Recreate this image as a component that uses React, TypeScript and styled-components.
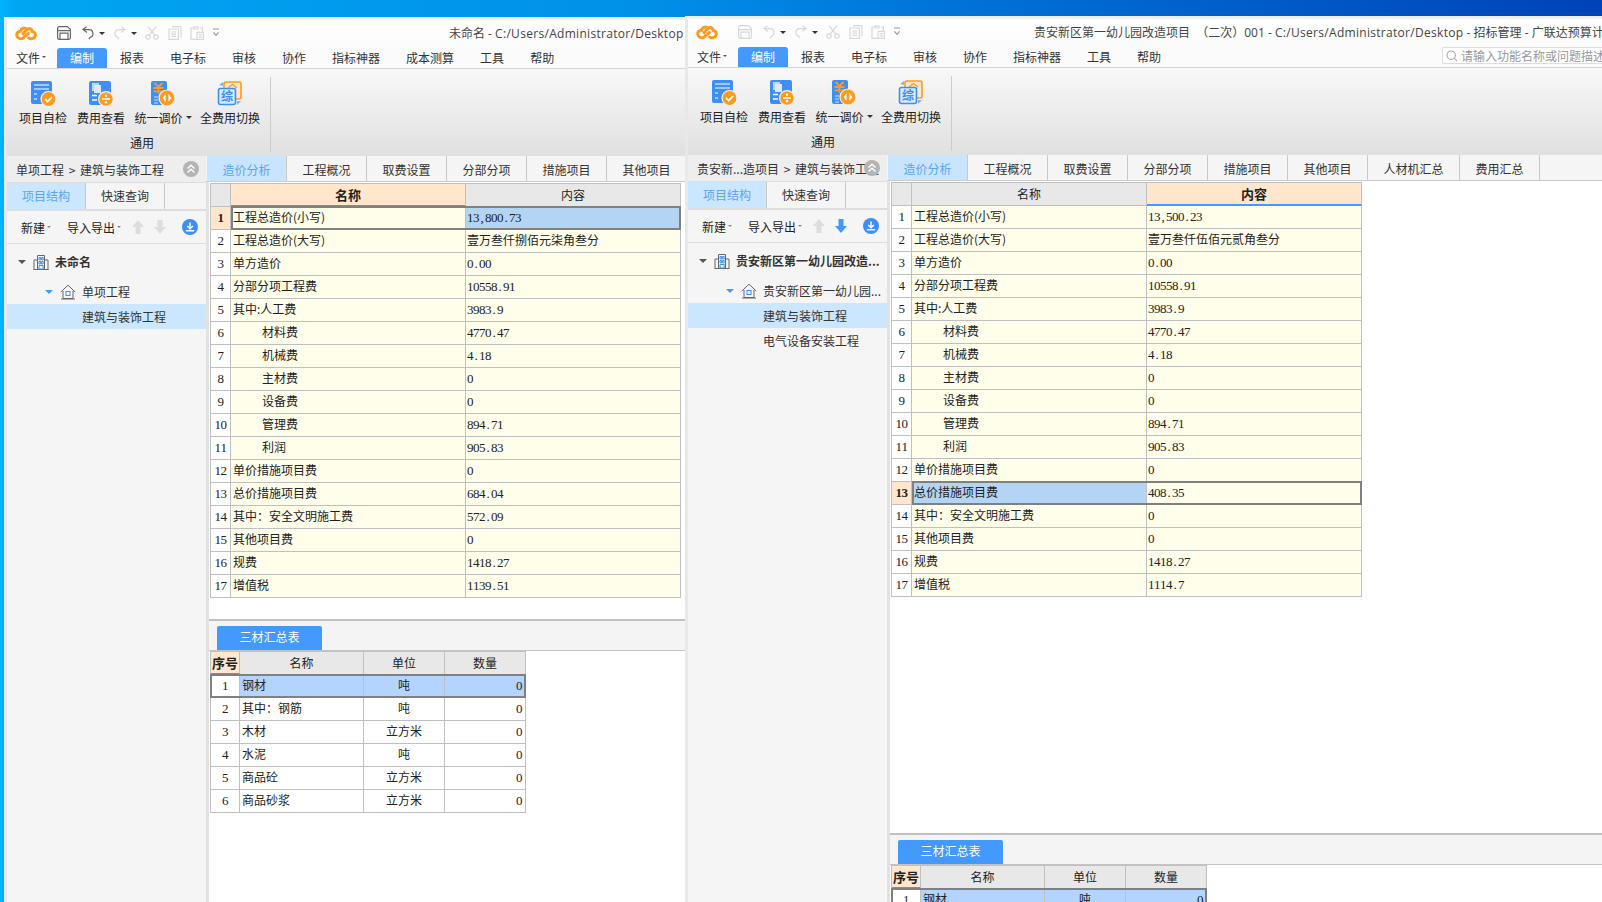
import React from 'react'
import styled, { createGlobalStyle } from 'styled-components'

const GlobalStyle = createGlobalStyle`
  html, body {
    margin: 0;
    padding: 0;
    width: 1602px;
    height: 902px;
    overflow: hidden;
    font-family: "Noto Sans CJK SC", "Noto Sans", sans-serif;
    font-size: 12px;
    color: #333;
  }
  * { box-sizing: border-box; }
`

const Desktop = styled.div`
  display: flex;
  align-items: flex-start;
  width: 1602px;
  height: 902px;
  overflow: hidden;
  padding-left: 4px;
  background: linear-gradient(90deg, #00b4ff 0, #00a6f2 1%, #0090e8 40%, #0072d8 60%, #0042b8 100%);
`

const Frame = styled.div<{ $w: number; $top: number }>`
  flex: none;
  display: flex;
  flex-direction: column;
  width: ${p => p.$w}px;
  height: 902px;
  margin-top: ${p => p.$top}px;
  border-left: 3px solid #e8e8e8;
  border-top: 3px solid #efefef;
  background: #fff;
  overflow: hidden;
`

const TitleRow = styled.div`
  display: flex;
  align-items: center;
  flex: none;
  height: 28px;
  padding: 0 0 2px 8px;
  background: linear-gradient(#fff, #fbfbfb);
`

const QuickBar = styled.div`
  display: flex;
  align-items: center;
  flex: none;
  width: 212px;
`

const Logo = styled.svg`
  width: 22px;
  height: 15px;
  margin-right: 20px;
  flex: none;
`

const QuickIcon = styled.svg<{ $gap?: number }>`
  width: 14px;
  height: 14px;
  flex: none;
  margin-right: ${p => p.$gap ?? 9}px;
  fill: none;
  stroke-width: 1.2;
`

const Caret = styled.span<{ $c?: string; $gap?: number; $s?: number }>`
  display: inline-block;
  flex: none;
  width: 0;
  height: 0;
  border-left: ${p => p.$s ?? 3}px solid transparent;
  border-right: ${p => p.$s ?? 3}px solid transparent;
  border-top: ${p => p.$s ?? 3}px solid ${p => p.$c ?? '#333'};
  margin-left: ${p => p.$gap ?? 2}px;
`

const QuickCaret = styled(Caret)`
  margin: 0 8px 0 0;
`

const Title = styled.div<{ $x: number }>`
  flex: 1;
  min-width: 0;
  padding-left: ${p => p.$x}px;
  white-space: nowrap;
  overflow: hidden;
  font-family: "Open Sans", "Noto Sans CJK SC", sans-serif;
  font-size: 12px;
  color: #444;
`

const TitlePath = styled.span`
  letter-spacing: 0.3px;
`

const MenuBar = styled.div`
  display: flex;
  align-items: flex-end;
  flex: none;
  height: 21px;
  border-bottom: 1px solid #d4d4d4;
  background: #fbfbfb;
  overflow: hidden;
`

const MenuItem = styled.div<{ $active?: boolean }>`
  display: flex;
  align-items: center;
  height: 20px;
  padding: 0 13px 2px;
  border-radius: 3px 3px 0 0;
  white-space: nowrap;
  color: ${p => (p.$active ? '#fff' : '#333')};
  background: ${p => (p.$active ? '#4499ff' : 'transparent')};
`

const FileItem = styled(MenuItem)`
  padding: 0 5px 2px 9px;
  width: 50px;
`

const SearchBox = styled.div`
  display: flex;
  align-items: center;
  flex: none;
  width: 160px;
  height: 17px;
  margin: 0 0 3px auto;
  padding-left: 3px;
  gap: 3px;
  border: 1px solid #ddd;
  border-right: none;
  border-radius: 2px 0 0 2px;
  background: #fff;
  color: #999;
  white-space: nowrap;
  overflow: hidden;
`

const Ribbon = styled.div`
  display: flex;
  flex: none;
  height: 87px;
  padding-top: 8px;
  background: linear-gradient(#f8f8f8, #e0e0e0);
`

const RibbonGroup = styled.div`
  display: flex;
  flex-direction: column;
  align-items: center;
  width: 264px;
  height: 75px;
  padding-left: 7px;
  border-right: 1px solid #ccc;
`

const RibbonRow = styled.div`
  display: flex;
  width: 100%;
  padding-top: 4px;
`

const RibbonButton = styled.div<{ $w: number }>`
  display: flex;
  flex-direction: column;
  align-items: center;
  flex: none;
  width: ${p => p.$w}px;
`

const RibbonIcon = styled.svg`
  width: 26px;
  height: 26px;
  flex: none;
`

const RibbonLabel = styled.div`
  display: flex;
  align-items: center;
  height: 20px;
  white-space: nowrap;
  color: #222;
`

const GroupLabel = styled.div`
  margin-top: 7px;
  color: #222;
`

const Body = styled.div`
  display: flex;
  flex: 1;
  min-height: 0;
`

const Side = styled.div`
  display: flex;
  flex-direction: column;
  flex: none;
  width: 199px;
  background: #f5f5f5;
`

const Crumb = styled.div`
  position: relative;
  flex: none;
  height: 27px;
  padding: 0 19px 0 9px;
  line-height: 28px;
  word-spacing: 2px;
  background: #eee;
  border-bottom: 1px solid #ddd;
  white-space: nowrap;
  overflow: hidden;
  color: #333;
`

const Collapse = styled.svg`
  position: absolute;
  top: 5px;
  right: 7px;
  width: 16px;
  height: 16px;
`

const SideTabs = styled.div`
  display: flex;
  flex: none;
  height: 28px;
  border-bottom: 2px solid #ddd;
`

const SideTab = styled.div<{ $active?: boolean }>`
  width: 79px;
  height: 26px;
  line-height: 26px;
  text-align: center;
  border-right: 1px solid #c8c8c8;
  color: ${p => (p.$active ? '#5aa5f0' : '#333')};
  background: ${p => (p.$active ? '#cbe6ff' : '#f5f5f5')};
`

const SideTools = styled.div`
  display: flex;
  align-items: center;
  flex: none;
  height: 33px;
  padding-left: 14px;
  border-bottom: 1px solid #ddd;
`

const ToolText = styled.span<{ $gap: number }>`
  display: inline-flex;
  align-items: center;
  flex: none;
  margin-right: ${p => p.$gap}px;
  white-space: nowrap;
  color: #222;
`

const ToolArrow = styled.svg<{ $gap: number }>`
  width: 12px;
  height: 14px;
  flex: none;
  margin-right: ${p => p.$gap}px;
`

const DownloadIcon = styled.svg`
  width: 16px;
  height: 16px;
  flex: none;
`

const Tree = styled.div`
  padding-top: 5px;
`

const Node = styled.div<{ $indent: number; $selected?: boolean; $root?: boolean }>`
  display: flex;
  align-items: center;
  height: 25px;
  margin-bottom: ${p => (p.$root ? 5 : 0)}px;
  padding-left: ${p => p.$indent}px;
  white-space: nowrap;
  overflow: hidden;
  font-weight: ${p => (p.$root ? 700 : 400)};
  color: #333;
  background: ${p => (p.$selected ? '#cbe6ff' : 'transparent')};
`

const NodeCaret = styled(Caret)`
  margin: 0 7px 0 0;
`

const NodeIcon = styled.svg<{ $gap: number }>`
  width: 16px;
  height: 16px;
  flex: none;
  margin-right: ${p => p.$gap}px;
`

const Main = styled.div`
  display: flex;
  flex-direction: column;
  flex: 1;
  min-width: 0;
`

const TabBar = styled.div`
  display: flex;
  flex: none;
  height: 26px;
  padding-left: 1px;
  background: #f5f5f5;
  border-bottom: 1px solid #ccc;
`

const Tab = styled.div<{ $active?: boolean; $w?: number }>`
  flex: none;
  width: ${p => p.$w ?? 80}px;
  line-height: 27px;
  text-align: center;
  border-right: 1px solid #c8c8c8;
  color: ${p => (p.$active ? '#5aa5f0' : '#333')};
  background: ${p => (p.$active ? '#c8e4ff' : '#f5f5f5')};
`

const Content = styled.div`
  display: flex;
  flex-direction: column;
  flex: 1;
  min-height: 0;
  border-left: 3px solid #e2e2e2;
`

const TopPane = styled.div<{ $h: number }>`
  flex: none;
  height: ${p => p.$h}px;
  padding: 1px 0 0 1px;
`

const Splitter = styled.div`
  flex: none;
  height: 2px;
  background: #c0c0c0;
`

const PaneTabs = styled.div`
  display: flex;
  align-items: flex-end;
  flex: none;
  height: 30px;
  padding-left: 8px;
  background: #f4f4f4;
  border-bottom: 1px solid #c4c4c4;
`

const PaneTab = styled.div`
  width: 105px;
  height: 24px;
  line-height: 22px;
  text-align: center;
  border-radius: 2px 2px 0 0;
  color: #fff;
  background: #4499ff;
`

const BottomPane = styled.div`
  padding-left: 1px;
`

const Grid = styled.div<{ $w: number; $lh: number }>`
  width: ${p => p.$w}px;
  line-height: ${p => p.$lh}px;
  border-left: 1px solid #c0c0c0;
  border-top: 1px solid #c0c0c0;
`

const Row = styled.div<{ $cols: string; $outline?: boolean; $from?: number }>`
  position: relative;
  display: grid;
  grid-template-columns: ${p => p.$cols};
  height: 23px;

  ${p =>
    p.$outline
      ? `&::after {
          content: '';
          position: absolute;
          top: -1px;
          bottom: 0;
          left: ${p.$from ?? -1}px;
          right: 0;
          border: 2px solid #808080;
          pointer-events: none;
        }`
      : ''}
`

const Cell = styled.div<{ $bg?: string }>`
  height: 23px;
  padding: 0 2px;
  white-space: nowrap;
  overflow: hidden;
  border-right: 1px solid #c0c0c0;
  border-bottom: 1px solid #c0c0c0;
  color: #222;
  background: ${p => p.$bg ?? '#fffeea'};
`

const HeadCell = styled(Cell)<{ $active?: boolean }>`
  text-align: center;
  padding: 0;
  line-height: 22px;
  font-size: ${p => (p.$active ? 13 : 12)}px;
  font-weight: ${p => (p.$active ? 700 : 400)};
  background: ${p => (p.$active ? '#ffe6cc' : '#e8e8e8')};
  ${p => (p.$active ? 'border-bottom: 2px solid #4499ff;' : '')}
`

const NumCell = styled(Cell)<{ $active?: boolean }>`
  padding: 0;
  text-align: center;
  font-weight: ${p => (p.$active ? 700 : 400)};
  background: ${p => (p.$active ? '#ffe6cc' : '#fff')};
`

const NameCell = styled(Cell)<{ $indent?: boolean; $edge?: boolean }>`
  padding-left: ${p => (p.$indent ? 31 : 2)}px;
  ${p => (p.$edge ? 'box-shadow: inset 2px 0 0 #4a90e2;' : '')}
`

const ValueCell = styled(Cell)`
  padding-left: 1px;
`

const Figure = styled.span`
  display: inline-block;
  width: 6px;
  text-align: center;
  font-family: "Liberation Serif", serif;
  font-size: 13px;
  color: #222;
`

const UnitCell = styled(Cell)`
  text-align: center;
`

const QtyCell = styled(Cell)`
  text-align: right;
  padding-right: 3px;
`

const CLOUD = '#ff9a1f'
const BLUE = '#3d8ef5'
const OFF = '#d8d8d8'

function Figures({ text }: { text: string }) {
  return (
    <>
      {text.split('').map((c, i) => (
        <Figure key={i}>{c}</Figure>
      ))}
    </>
  )
}

function CloudLogo() {
  return (
    <Logo viewBox="0 0 22 15" fill="none" stroke={CLOUD} strokeWidth="3" strokeLinecap="round">
      <path d="M11.5 3.2C10 1.5 6.5 1.5 5.6 5.2C2.8 5.2 1.5 7.4 1.8 9.4C2.2 12.4 5.6 13.6 8 12.2L9.5 10.6" />
      <path d="M8.2 7.8L12 3.6C14 1.8 17 2.6 17.2 5.4C19.6 5.6 20.8 7.8 20.2 9.8C19.4 12.8 15.8 13.4 13.6 12" />
      <path d="M11 9.6L13.4 7.4" />
    </Logo>
  )
}

function SaveIcon({ c }: { c: string }) {
  return (
    <QuickIcon viewBox="0 0 14 14" stroke={c} $gap={10}>
      <path d="M.6 2.2A1.6 1.6 0 0 1 2.2.6h8l3.2 2.6v8.6a1.6 1.6 0 0 1-1.6 1.6H2.2a1.6 1.6 0 0 1-1.6-1.6z" />
      <path d="M.6 4.6h12.8M3 13.2V7.2h8v6" />
    </QuickIcon>
  )
}

function UndoIcon({ c, flip }: { c: string; flip?: boolean }) {
  return (
    <QuickIcon viewBox="0 0 14 14" stroke={c} $gap={4}>
      <g transform={flip ? 'matrix(-1 0 0 1 14 0)' : undefined}>
        <path d="M5.5.8L2 3.6l4 3" />
        <path d="M2.2 3.6h6a4 4 0 0 1 1 7.8l-1.4 1.6" />
      </g>
    </QuickIcon>
  )
}

function CutIcon() {
  return (
    <QuickIcon viewBox="0 0 14 14" stroke={OFF}>
      <circle cx="3" cy="11" r="2.2" />
      <circle cx="11" cy="11" r="2.2" />
      <path d="M4.2 9.2L11 .6M9.8 9.2L3 .6" />
    </QuickIcon>
  )
}

function CopyIcon() {
  return (
    <QuickIcon viewBox="0 0 14 14" stroke={OFF} $gap={8}>
      <path d="M4 .6h9v10.6M1 3h9.4v10.4H1zM3.4 6h4.6M3.4 8.2h4.6M3.4 10.4h4.6" />
    </QuickIcon>
  )
}

function PasteIcon() {
  return (
    <QuickIcon viewBox="0 0 14 14" stroke={OFF} $gap={8}>
      <path d="M4 2H1v11.4h6M10 2h2.4v3.6M4 .8h4V3H4zM7 6.4h6.4v7H7zM8.8 8.6h3M8.8 10.8h3" />
    </QuickIcon>
  )
}

function MoreIcon() {
  return (
    <QuickIcon viewBox="0 0 14 14" stroke="#999">
      <path d="M1 3h6M1.4 6.4L4 9.4l2.6-3" />
    </QuickIcon>
  )
}

function CheckIcon() {
  return (
    <RibbonIcon viewBox="0 0 26 26">
      <rect x="1" y="0" width="21" height="23" rx="2" fill={BLUE} />
      <path d="M4 4h15M4 8h15M4 13h3M4 18h3" stroke="#fff" strokeWidth="1.2" />
      <circle cx="18.5" cy="18" r="7.5" fill={CLOUD} stroke="#f2f2f2" strokeWidth="1.2" />
      <path d="M15 18l2.6 2.6 4.4-4.6" stroke="#fff" strokeWidth="1.8" fill="none" />
    </RibbonIcon>
  )
}

function CostIcon() {
  return (
    <RibbonIcon viewBox="0 0 26 26">
      <rect x="1" y="0" width="22" height="24" rx="2" fill={BLUE} />
      <rect x="4" y="2" width="7" height="8" fill="#b9d6fb" />
      <rect x="6" y="4" width="7" height="8" fill="#dbe9fd" />
      <path d="M4 14.5h5M4 19h5" stroke="#fff" strokeWidth="1.6" />
      <circle cx="18" cy="18" r="7.4" fill={CLOUD} stroke="#f2f2f2" strokeWidth="1.2" />
      <path d="M14 18h8" stroke="#fff" strokeWidth="1.5" />
      <circle cx="18" cy="14.8" r="1.2" fill="#fff" />
      <circle cx="18" cy="21.2" r="1.2" fill="#fff" />
    </RibbonIcon>
  )
}

function PriceIcon() {
  return (
    <RibbonIcon viewBox="0 0 26 26">
      <rect x="1" y="0" width="16" height="24" rx="2" fill={BLUE} />
      <path d="M4.5 2l4 4 4-4M3.5 7h10M3.5 10.4h10M8.5 6v7" stroke={CLOUD} strokeWidth="1.8" fill="none" />
      <path d="M4 16h4M4 19h4M4 22h4" stroke="#cfe2fc" strokeWidth="1.2" />
      <circle cx="17" cy="17" r="8" fill={CLOUD} stroke="#f2f2f2" strokeWidth="1.2" />
      <path d="M15.6 13l-3 4 3 4zM18.4 13l3 4-3 4z" fill="#fff" />
    </RibbonIcon>
  )
}

function SwitchIcon() {
  return (
    <RibbonIcon viewBox="0 0 26 26">
      <rect x="7" y="1" width="17" height="17" rx="2" fill="#fbe8cf" stroke={CLOUD} strokeWidth="1.6" />
      <path d="M11 7l4.5-3.5L20 7M12 10h7M12 13h7" stroke={CLOUD} strokeWidth="1.2" fill="none" />
      <path d="M2 4l4-3v4zM24 20l-4 4v-4z" fill="#7fb2f5" />
      <rect x="1.5" y="7.5" width="17" height="16" rx="2" fill="#d9e9fd" stroke={BLUE} strokeWidth="1.6" />
      <text x="10" y="20" fontSize="12" textAnchor="middle" fill={BLUE} fontWeight="700">综</text>
    </RibbonIcon>
  )
}

function SearchIcon() {
  return (
    <svg width="12" height="12" viewBox="0 0 12 12" fill="none" stroke="#aaa" strokeWidth="1.1" style={{ flex: 'none' }}>
      <circle cx="5.2" cy="5.2" r="4.2" />
      <path d="M8.4 8.4L11 11" />
    </svg>
  )
}

function CollapseIcon() {
  return (
    <Collapse viewBox="0 0 16 16">
      <circle cx="8" cy="8" r="8" fill="#b4b4b4" />
      <path d="M4.5 7.5L8 4.2l3.5 3.3M4.5 11.5L8 8.2l3.5 3.3" stroke="#fff" strokeWidth="1.4" fill="none" />
    </Collapse>
  )
}

function ArrowIcon({ c, gap, up }: { c: string; gap: number; up?: boolean }) {
  return (
    <ToolArrow viewBox="0 0 12 14" $gap={gap}>
      <path d={up ? 'M6 0l6 7H8.5v7h-5V7H0z' : 'M6 14l6-7H8.5V0h-5v7H0z'} fill={c} />
    </ToolArrow>
  )
}

function GetIcon() {
  return (
    <DownloadIcon viewBox="0 0 16 16">
      <circle cx="8" cy="8" r="8" fill={BLUE} />
      <path d="M8 3.5v6M5.2 7L8 9.8 10.8 7M3.8 11.8h8.4" stroke="#fff" strokeWidth="1.5" fill="none" />
    </DownloadIcon>
  )
}

function BuildingIcon() {
  return (
    <NodeIcon viewBox="0 0 16 16" $gap={6}>
      <path d="M.5 15.5h15M4.5 15.5V1.5h7v14M1 15.5V6h3.5M15 15.5V6h-3.5" stroke="#666" fill="none" />
      <path d="M6 3.5h1.6v2.4H6zM8.6 3.5h1.6v2.4H8.6zM6 7.5h1.6v2.4H6zM8.6 7.5h1.6v2.4H8.6zM6 11.5h4.2V15H6z" fill="none" stroke={BLUE} />
    </NodeIcon>
  )
}

function HomeIcon() {
  return (
    <NodeIcon viewBox="0 0 16 16" $gap={6}>
      <path d="M.8 8L8 1.2 15.2 8M3 7v7.5h10V7M1 15h14" stroke="#666" fill="none" />
      <rect x="6" y="7.5" width="4" height="4" fill="none" stroke={BLUE} />
    </NodeIcon>
  )
}

type Line = { name: string; indent?: boolean }

const LINES: Line[] = [
  { name: '工程总造价(小写)' },
  { name: '工程总造价(大写)' },
  { name: '单方造价' },
  { name: '分部分项工程费' },
  { name: '其中:人工费' },
  { name: '材料费', indent: true },
  { name: '机械费', indent: true },
  { name: '主材费', indent: true },
  { name: '设备费', indent: true },
  { name: '管理费', indent: true },
  { name: '利润', indent: true },
  { name: '单价措施项目费' },
  { name: '总价措施项目费' },
  { name: '其中：安全文明施工费' },
  { name: '其他项目费' },
  { name: '规费' },
  { name: '增值税' },
]

const MATERIALS = [
  { name: '钢材', unit: '吨' },
  { name: '其中：钢筋', unit: '吨' },
  { name: '木材', unit: '立方米' },
  { name: '水泥', unit: '吨' },
  { name: '商品砼', unit: '立方米' },
  { name: '商品砂浆', unit: '立方米' },
]

const MENUS = ['报表', '电子标', '审核', '协作', '指标神器']
const BLUE_CELL = '#b3d4f2'
const MAIN_COLS = '20px 235px 215px'
const SUB_COLS = '29px 124px 81px 81px'
const DESKTOP_PATH = 'C:/Users/Administrator/Desktop'

type WindowProps = {
  width: number
  top: number
  titleX: number
  title: React.ReactNode
  menus: string[]
  search?: boolean
  crumb: string
  tabs: [string, number?][]
  downOn?: boolean
  tree: React.ReactNode
  values: string[]
  selected: number
  activeCol: 'name' | 'value'
  topHeight: number
}

function Window(p: WindowProps) {
  return (
    <Frame $w={p.width} $top={p.top}>
      <TitleRow>
        <QuickBar>
          <CloudLogo />
          <SaveIcon c={p.search ? OFF : '#666'} />
          <UndoIcon c={p.search ? OFF : '#666'} />
          <QuickCaret />
          <UndoIcon c={OFF} flip />
          <QuickCaret />
          <CutIcon />
          <CopyIcon />
          <PasteIcon />
          <MoreIcon />
        </QuickBar>
        <Title $x={p.titleX}>{p.title}</Title>
      </TitleRow>
      <MenuBar>
        <FileItem>文件<Caret $s={2.5} $c="#555" /></FileItem>
        <MenuItem $active>编制</MenuItem>
        {p.menus.map(m => (
          <MenuItem key={m}>{m}</MenuItem>
        ))}
        {p.search && (
          <SearchBox>
            <SearchIcon />
            请输入功能名称或问题描述
          </SearchBox>
        )}
      </MenuBar>
      <Ribbon>
        <RibbonGroup>
          <RibbonRow>
            <RibbonButton $w={58}><CheckIcon /><RibbonLabel>项目自检</RibbonLabel></RibbonButton>
            <RibbonButton $w={58}><CostIcon /><RibbonLabel>费用查看</RibbonLabel></RibbonButton>
            <RibbonButton $w={66}><PriceIcon /><RibbonLabel>统一调价<Caret $gap={3} /></RibbonLabel></RibbonButton>
            <RibbonButton $w={68}><SwitchIcon /><RibbonLabel>全费用切换</RibbonLabel></RibbonButton>
          </RibbonRow>
          <GroupLabel>通用</GroupLabel>
        </RibbonGroup>
      </Ribbon>
      <Body>
        <Side>
          <Crumb>
            {p.crumb}
            <CollapseIcon />
          </Crumb>
          <SideTabs>
            <SideTab $active>项目结构</SideTab>
            <SideTab>快速查询</SideTab>
          </SideTabs>
          <SideTools>
            <ToolText $gap={16}>新建<Caret $s={2.5} $c="#888" /></ToolText>
            <ToolText $gap={11}>导入导出<Caret $s={2.5} $c="#888" /></ToolText>
            <ArrowIcon c="#ddd" gap={10} up />
            <ArrowIcon c={p.downOn ? '#4499ff' : '#ddd'} gap={16} />
            <GetIcon />
          </SideTools>
          <Tree>{p.tree}</Tree>
        </Side>
        <Main>
          <TabBar>
            {p.tabs.map(([t, w], i) => (
              <Tab key={t} $active={i === 0} $w={w}>{t}</Tab>
            ))}
          </TabBar>
          <Content>
            <TopPane $h={p.topHeight}>
              <Grid $w={471} $lh={19}>
                <Row $cols={MAIN_COLS}>
                  <HeadCell />
                  <HeadCell $active={p.activeCol === 'name'}>名称</HeadCell>
                  <HeadCell $active={p.activeCol === 'value'}>内容</HeadCell>
                </Row>
                {LINES.map((l, i) => {
                  const isSel = i === p.selected
                  const plain = /^[\d.,]+$/.test(p.values[i])
                  return (
                    <Row key={l.name} $cols={MAIN_COLS} $outline={isSel} $from={20}>
                      <NumCell $active={isSel}><Figures text={String(i + 1)} /></NumCell>
                      <NameCell
                        $indent={l.indent}
                        $edge={isSel && p.activeCol === 'name'}
                        $bg={isSel && p.activeCol === 'value' ? BLUE_CELL : undefined}
                      >
                        {l.name}
                      </NameCell>
                      <ValueCell $bg={isSel && p.activeCol === 'name' ? BLUE_CELL : undefined}>
                        {plain ? <Figures text={p.values[i]} /> : p.values[i]}
                      </ValueCell>
                    </Row>
                  )
                })}
              </Grid>
            </TopPane>
            <Splitter />
            <PaneTabs>
              <PaneTab>三材汇总表</PaneTab>
            </PaneTabs>
            <BottomPane>
              <Grid $w={316} $lh={20}>
                <Row $cols={SUB_COLS}>
                  <HeadCell $active>序号</HeadCell>
                  <HeadCell>名称</HeadCell>
                  <HeadCell>单位</HeadCell>
                  <HeadCell>数量</HeadCell>
                </Row>
                {MATERIALS.map((m, i) => {
                  const bg = i === 0 ? '#b3d4ff' : '#fff'
                  return (
                    <Row key={m.name} $cols={SUB_COLS} $outline={i === 0}>
                      <NumCell><Figures text={String(i + 1)} /></NumCell>
                      <Cell $bg={bg}>{m.name}</Cell>
                      <UnitCell $bg={bg}>{m.unit}</UnitCell>
                      <QtyCell $bg={bg}><Figures text="0" /></QtyCell>
                    </Row>
                  )
                })}
              </Grid>
            </BottomPane>
          </Content>
        </Main>
      </Body>
    </Frame>
  )
}

const BASE_TABS: [string, number?][] = [
  ['造价分析'],
  ['工程概况'],
  ['取费设置'],
  ['分部分项'],
  ['措施项目'],
  ['其他项目'],
]

export default function App() {
  return (
    <>
      <GlobalStyle />
      <Desktop>
        <Window
          width={681}
          top={17}
          titleX={222}
          title={<>未命名 - <TitlePath>{DESKTOP_PATH}</TitlePath></>}
          menus={[...MENUS, '成本测算', '工具', '帮助']}
          crumb="单项工程 > 建筑与装饰工程"
          tabs={BASE_TABS}
          values={['13,800.73', '壹万叁仟捌佰元柒角叁分', '0.00', '10558.91', '3983.9', '4770.47', '4.18', '0', '0', '894.71', '905.83', '0', '684.04', '572.09', '0', '1418.27', '1139.51']}
          selected={0}
          activeCol="name"
          topHeight={437}
          tree={
            <>
              <Node $root $indent={11}><NodeCaret $s={4} $c="#555" /><BuildingIcon />未命名</Node>
              <Node $indent={38}><NodeCaret $s={4} $c="#4499ff" /><HomeIcon />单项工程</Node>
              <Node $selected $indent={75}>建筑与装饰工程</Node>
            </>
          }
        />
        <Window
          width={917}
          top={16}
          titleX={126}
          title={<>贵安新区第一幼儿园改造项目{'\u00a0'} （二次）001 - <TitlePath>{DESKTOP_PATH}</TitlePath> - 招标管理 - 广联达预算计价</>}
          menus={[...MENUS, '工具', '帮助']}
          search
          crumb="贵安新...造项目 > 建筑与装饰工程"
          tabs={[...BASE_TABS, ['人材机汇总', 92], ['费用汇总']]}
          downOn
          values={['13,500.23', '壹万叁仟伍佰元贰角叁分', '0.00', '10558.91', '3983.9', '4770.47', '4.18', '0', '0', '894.71', '905.83', '0', '408.35', '0', '0', '1418.27', '1114.7']}
          selected={12}
          activeCol="value"
          topHeight={652}
          tree={
            <>
              <Node $root $indent={11}><NodeCaret $s={4} $c="#555" /><BuildingIcon />贵安新区第一幼儿园改造...</Node>
              <Node $indent={38}><NodeCaret $s={4} $c="#4499ff" /><HomeIcon />贵安新区第一幼儿园...</Node>
              <Node $selected $indent={75}>建筑与装饰工程</Node>
              <Node $indent={75}>电气设备安装工程</Node>
            </>
          }
        />
      </Desktop>
    </>
  )
}
